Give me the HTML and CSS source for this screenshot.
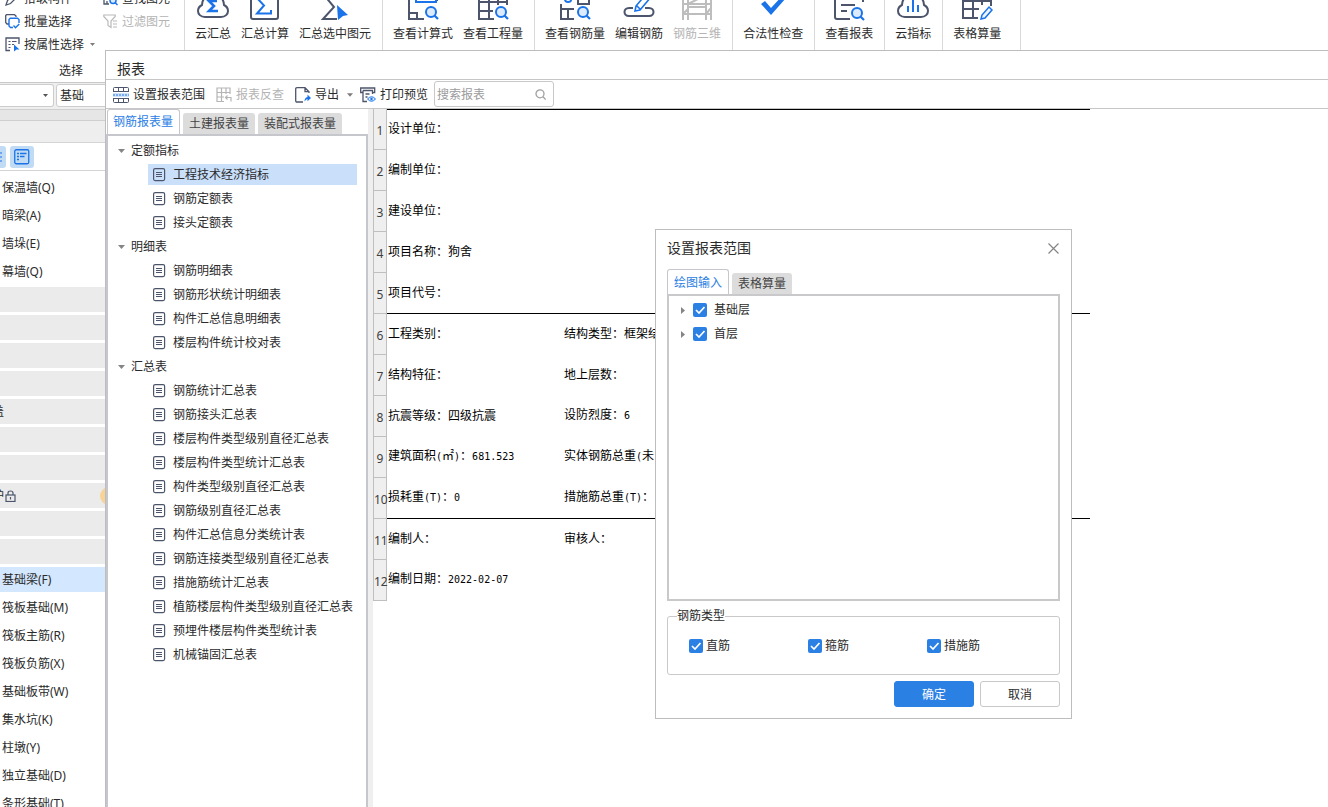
FILE: index.html
```html
<!DOCTYPE html>
<html lang="zh-CN">
<head>
<meta charset="utf-8">
<meta name="viewport" content="width=device-width, initial-scale=1">
<title>报表</title>
<link rel="stylesheet" href="styles.css">
</head>
<body>
<svg class="defs" aria-hidden="true">
  <symbol id="i-doc" viewBox="0 0 13 14"><rect x=".6" y=".6" width="11" height="12" rx="1.5" fill="none" stroke="#4c556b" stroke-width="1.2"/><path d="M3 4.500h6M3 6.500h6M3 8.500h6" stroke="#4c556b"/></symbol>
  <symbol id="i-down" viewBox="0 0 7 4"><path d="M0 0h7L3.5 4z" fill="currentColor"/></symbol>
  <symbol id="i-right" viewBox="0 0 4 7"><path d="M0 0v7L4 3.500z" fill="currentColor"/></symbol>
  <symbol id="i-lens" viewBox="0 0 14 14"><circle cx="6" cy="6" r="5" fill="#dcebff" stroke="#1a73e8" stroke-width="2"/><path d="M9.500 9.500L13 13" stroke="#1a73e8" stroke-width="2.200"/></symbol>
</svg>

<main class="app">
  <header class="ribbon">
    <section class="pick">
      <div class="pick-grid">
        <button class="cmd"><svg width="15" height="15" viewBox="0 0 15 15" fill="none"><path d="M1 14l1.500-4.500 7-7 3 3-7 7z" stroke="#4c556b" stroke-width="1.300"/><path d="M8 4l3 3" stroke="#1a73e8" stroke-width="1.500"/></svg>拾取构件</button>
        <button class="cmd"><svg width="15" height="15" viewBox="0 0 15 15" fill="none"><path d="M1 1v12h5M1 1h10v3M4 5h3M4 13v-3" stroke="#4c556b" stroke-width="1.300"/><circle cx="10" cy="9.500" r="3" fill="#dcebff" stroke="#1a73e8" stroke-width="1.500"/><path d="M12 11.500l2.500 2.500" stroke="#1a73e8" stroke-width="1.500"/></svg>查找图元</button>
        <button class="cmd"><svg width="15" height="15" viewBox="0 0 15 15" fill="none"><path d="M4 10H2L.700 8.500V1.500L1.500.700h8l1.500 1.300v1" stroke="#4c556b" stroke-width="1.300"/><path d="M8 13.500H5.500L4 12V5.500L5.200 4.300H12.500L14 5.500V9" stroke="#1a73e8" stroke-width="1.400"/><path d="M8.500 11.500l2 2.200 3.700-3.700" stroke="#1a73e8" stroke-width="1.400"/></svg>批量选择</button>
        <button class="cmd" disabled><svg width="15" height="15" viewBox="0 0 15 15" fill="none" stroke="#b9b9b9" stroke-width="1.200"><path d="M.800 1h11.400v1.500L8 7v6.500L5 11.500V7L.800 2.500zM10 7h4M10 10h4M10 13h4"/></svg>过滤图元</button>
        <button class="cmd cmd-wide"><svg width="15" height="15" viewBox="0 0 15 15" fill="none"><path d="M5 13.500H1V1h13v6" stroke="#4c556b" stroke-width="1.300"/><path d="M3.500 4.500h2M7 4.500h4.500M3.500 7.500h2M7 7.500h2M3.500 10.500h2" stroke="#4c556b" stroke-width="1.200"/><path d="M9 7.500l5.500 5H11.500L9 14.500z" fill="#1a73e8"/></svg>按属性选择<svg class="caret" width="5" height="3"><use href="#i-down"/></svg></button>
      </div>
      <div class="pick-label">选择</div>
    </section>
    <section class="group">
      <button class="tool"><svg width="32" height="32" viewBox="0 0 32 32" fill="none"><path d="M8 27C3.500 27 1 24 1 21c0-3 2-5 4-6C5 9 10 4 16 4s11 5 11 11c2 1 4 3 4 6 0 3-2.500 6-7 6z" stroke="#4c556b" stroke-width="2"/><path d="M20 11h-8l5 5-5 5h9" stroke="#1a73e8" stroke-width="2.600"/></svg>云汇总</button>
      <button class="tool"><svg width="32" height="32" viewBox="0 0 32 32" fill="none"><rect x="2" y="2" width="27" height="27" rx="2" stroke="#4c556b" stroke-width="2"/><path d="M21 8H8l7 7.500-7 8h14V20" stroke="#1a73e8" stroke-width="2"/></svg>汇总计算</button>
      <button class="tool"><svg width="32" height="32" viewBox="0 0 32 32" fill="none"><path d="M21 5H5l10 12L4 29h14" stroke="#4c556b" stroke-width="2"/><path d="M18 15l11 10-5 1-5 4z" fill="#1a73e8"/></svg>汇总选中图元</button>
    </section>
    <section class="group">
      <button class="tool"><svg width="32" height="32" viewBox="0 0 32 32" fill="none"><path d="M17 29H2V2h28v9M2 23h8v6" stroke="#4c556b" stroke-width="2"/><path d="M9 5v7h20V5" stroke="#1a73e8" stroke-width="2"/><use href="#i-lens" x="18" y="16" width="14" height="14"/></svg>查看计算式</button>
      <button class="tool"><svg width="32" height="32" viewBox="0 0 32 32" fill="none"><path d="M17 29H2V3h28v12M2 12h28M2 21h14M12 3v26M21 3v12" stroke="#4c556b" stroke-width="2"/><use href="#i-lens" x="18" y="16" width="14" height="14"/></svg>查看工程量</button>
    </section>
    <section class="group">
      <button class="tool"><svg width="32" height="32" viewBox="0 0 32 32" fill="none"><path d="M15 29H2V14M2 19h13M9 19v10M19 5v9h11V5" stroke="#4c556b" stroke-width="2"/><path d="M6 6v3q0 3 3 3t3-2" stroke="#1a73e8" stroke-width="2"/><use href="#i-lens" x="18" y="16" width="14" height="14"/></svg>查看钢筋量</button>
      <button class="tool"><svg width="32" height="32" viewBox="0 0 32 32" fill="none"><path d="M10 18H6c-6 0-6 8 0 8h20c6 0 6-8 0-8h-4" stroke="#4c556b" stroke-width="2"/><path d="M12 21l1-5L24 3l4 4-11 13zM14 16l3 3" stroke="#1a73e8" stroke-width="1.600"/></svg>编辑钢筋</button>
      <button class="tool" disabled><svg width="32" height="32" viewBox="0 0 32 32" fill="none" stroke="#bdbdbd" stroke-width="2"><path d="M2 3v27M7 3v27M25 3v27M30 3v27M2 14h28M2 24h28M7 14l18-9M2 24l5-5M7 17h18M25 24l5-6"/></svg>钢筋三维</button>
    </section>
    <section class="group">
      <button class="tool"><svg width="32" height="32" viewBox="0 0 32 32"><path d="M4 14l4-3 6 7L26 5l3 3-15 17z" fill="#1a73e8"/></svg>合法性检查</button>
    </section>
    <section class="group">
      <button class="tool"><svg width="32" height="32" viewBox="0 0 32 32" fill="none"><path d="M17 29H4q-2 0-2-2V3h28v9M8 15h14M8 21h6" stroke="#4c556b" stroke-width="2"/><use href="#i-lens" x="18" y="17" width="14" height="14"/></svg>查看报表</button>
    </section>
    <section class="group">
      <button class="tool"><svg width="32" height="32" viewBox="0 0 32 32" fill="none"><path d="M8 27C3.500 27 1 24 1 21c0-3 2-5 4-6C5 9 10 4 16 4s11 5 11 11c2 1 4 3 4 6 0 3-2.500 6-7 6z" stroke="#4c556b" stroke-width="2"/><path d="M11 22v-6M16 22V10M21 22v-7" stroke="#1a73e8" stroke-width="2"/></svg>云指标</button>
    </section>
    <section class="group group-last">
      <button class="tool"><svg width="32" height="32" viewBox="0 0 32 32" fill="none"><path d="M17 28H2V3h28v13M2 11h28M2 19h16M12 3v25M21 3v12" stroke="#4c556b" stroke-width="2"/><path d="M20 29l1-4 7-8 3 3-7 8z" stroke="#1a73e8" stroke-width="1.500" fill="#eef5ff"/></svg>表格算量</button>
    </section>
  </header>

  <aside class="side">
    <div class="side-selects">
      <select class="sel sel-a" aria-label="楼层"><option></option></select>
      <select class="sel sel-b" aria-label="构件类型"><option>基础</option></select>
    </div>
    <div class="bar bar-dark"></div>
    <div class="bar bar-light"></div>
    <div class="side-views">
      <button class="view view-cut" aria-label="列表视图"><svg width="5" height="16" viewBox="0 0 5 16"><path d="M0 4h2M0 8h2M0 12h2" stroke="#1a73e8"/></svg></button>
      <button class="view" aria-label="分组视图"><svg width="16" height="16" viewBox="0 0 16 16" fill="none" stroke="#1a73e8" stroke-width="1.300"><rect x=".750" y=".750" width="14" height="14" rx="1.500"/><path d="M3 4.500h2M6 4.500h6.500M3 7.500h2M6 7.500h4.500M3 10.500h2"/></svg></button>
    </div>
    <nav class="kinds">
      <button class="kind">保温墙(Q)</button>
      <button class="kind">暗梁(A)</button>
      <button class="kind">墙垛(E)</button>
      <button class="kind">幕墙(Q)</button>
      <div class="head"></div>
      <div class="head"></div>
      <div class="head"></div>
      <div class="head"></div>
      <div class="head"><span class="tail">盖</span></div>
      <div class="head"></div>
      <div class="head"></div>
      <div class="head"><span class="tail">护</span><svg class="lock" width="11" height="12" viewBox="0 0 11 12" fill="none" stroke="#4c556b" stroke-width="1.200"><rect x="1" y="5" width="9" height="6.500"/><path d="M3 5V3q0-2 2.500-2T8 3v2M5.500 7v2.500"/></svg><i class="dot"></i></div>
      <div class="head"></div>
      <div class="head"></div>
      <button class="kind kind-on">基础梁(F)</button>
      <button class="kind">筏板基础(M)</button>
      <button class="kind">筏板主筋(R)</button>
      <button class="kind">筏板负筋(X)</button>
      <button class="kind">基础板带(W)</button>
      <button class="kind">集水坑(K)</button>
      <button class="kind">柱墩(Y)</button>
      <button class="kind">独立基础(D)</button>
      <button class="kind">条形基础(T)</button>
    </nav>
  </aside>

  <section class="window" aria-label="报表">
    <h1 class="window-title">报表</h1>
    <div class="toolbar">
      <button class="act"><svg width="16" height="16" viewBox="0 0 16 16" fill="none"><path d="M.500 5V1.500q0-1 1-1h13q1 0 1 1V5M.500 11v3.500q0 1 1 1h13q1 0 1-1V11M5.500 1v4M10.500 1v4M5.500 11v4.500M10.500 11v4.500M1 4.500h14M1 11.500h14" stroke="#4c556b"/><path d="M0 6h16v4H0z" fill="#cfe3fc"/><path d="M0 8h16" stroke="#1a73e8" stroke-dasharray="2 1"/></svg>设置报表范围</button>
      <button class="act" disabled><svg width="16" height="16" viewBox="0 0 16 16" fill="none" stroke="#b5b5b5" stroke-width="1.200"><path d="M8 14.500H1V1h13v6M1 5.500h13M1 10h7M5.500 1v13.500M10 1v6M15 14.500V10.500H9.500M11.500 8.500l-2 2 2 2"/></svg>报表反查</button>
      <button class="act"><svg width="16" height="16" viewBox="0 0 16 16" fill="none"><path d="M8 15H2q-1.300 0-1.300-1.300V2Q.700.700 2 .700h8l4 4V6M10 1v3.700h4" stroke="#4c556b" stroke-width="1.300"/><path d="M9.500 14.500q0-4 3-4.500V7.500l3.500 3.500-3.500 3.200V12q-1.500 0-3 2.500z" fill="#1a73e8"/></svg>导出<svg class="caret" width="6" height="4"><use href="#i-down"/></svg></button>
      <button class="act"><svg width="16" height="16" viewBox="0 0 16 16" fill="none"><path d="M2.500 5.500H.700V1h14v4.500H13M3 3.500h9.500V7M3 3.500v11h4M5.500 7h4M5.500 10h2" stroke="#4c556b" stroke-width="1.300"/><path d="M7.500 12q4-4.500 8 0-4 4.500-8 0z" fill="#dcebff" stroke="#1a73e8"/><circle cx="11.500" cy="12" r="1.200" fill="#1a73e8"/></svg>打印预览</button>
      <label class="search"><input type="search" placeholder="搜索报表" aria-label="搜索报表"><svg width="11" height="11" viewBox="0 0 11 11" fill="none" stroke="#a0a0a0" stroke-width="1.300"><circle cx="5" cy="4.800" r="4"/><path d="M8 7.800l2.700 2.700"/></svg></label>
    </div>
    <div class="body">
      <div class="left">
        <div class="tabs">
          <button class="tab tab-on">钢筋报表量</button>
          <button class="tab">土建报表量</button>
          <button class="tab">装配式报表量</button>
        </div>
        <div class="tree">
          <button class="node"><svg width="7" height="4"><use href="#i-down"/></svg>定额指标</button>
          <button class="leaf leaf-on"><svg width="13" height="14"><use href="#i-doc"/></svg>工程技术经济指标</button>
          <button class="leaf"><svg width="13" height="14"><use href="#i-doc"/></svg>钢筋定额表</button>
          <button class="leaf"><svg width="13" height="14"><use href="#i-doc"/></svg>接头定额表</button>
          <button class="node"><svg width="7" height="4"><use href="#i-down"/></svg>明细表</button>
          <button class="leaf"><svg width="13" height="14"><use href="#i-doc"/></svg>钢筋明细表</button>
          <button class="leaf"><svg width="13" height="14"><use href="#i-doc"/></svg>钢筋形状统计明细表</button>
          <button class="leaf"><svg width="13" height="14"><use href="#i-doc"/></svg>构件汇总信息明细表</button>
          <button class="leaf"><svg width="13" height="14"><use href="#i-doc"/></svg>楼层构件统计校对表</button>
          <button class="node"><svg width="7" height="4"><use href="#i-down"/></svg>汇总表</button>
          <button class="leaf"><svg width="13" height="14"><use href="#i-doc"/></svg>钢筋统计汇总表</button>
          <button class="leaf"><svg width="13" height="14"><use href="#i-doc"/></svg>钢筋接头汇总表</button>
          <button class="leaf"><svg width="13" height="14"><use href="#i-doc"/></svg>楼层构件类型级别直径汇总表</button>
          <button class="leaf"><svg width="13" height="14"><use href="#i-doc"/></svg>楼层构件类型统计汇总表</button>
          <button class="leaf"><svg width="13" height="14"><use href="#i-doc"/></svg>构件类型级别直径汇总表</button>
          <button class="leaf"><svg width="13" height="14"><use href="#i-doc"/></svg>钢筋级别直径汇总表</button>
          <button class="leaf"><svg width="13" height="14"><use href="#i-doc"/></svg>构件汇总信息分类统计表</button>
          <button class="leaf"><svg width="13" height="14"><use href="#i-doc"/></svg>钢筋连接类型级别直径汇总表</button>
          <button class="leaf"><svg width="13" height="14"><use href="#i-doc"/></svg>措施筋统计汇总表</button>
          <button class="leaf"><svg width="13" height="14"><use href="#i-doc"/></svg>植筋楼层构件类型级别直径汇总表</button>
          <button class="leaf"><svg width="13" height="14"><use href="#i-doc"/></svg>预埋件楼层构件类型统计表</button>
          <button class="leaf"><svg width="13" height="14"><use href="#i-doc"/></svg>机械锚固汇总表</button>
        </div>
      </div>
      <div class="splitter"></div>
      <div class="sheet">
        <table class="report">
          <colgroup><col class="c-num"><col class="c-a"><col class="c-b"></colgroup>
          <tbody>
            <tr class="rule-top"><th scope="row">1</th><td>设计单位：</td><td></td></tr>
            <tr><th scope="row">2</th><td>编制单位：</td><td></td></tr>
            <tr><th scope="row">3</th><td>建设单位：</td><td></td></tr>
            <tr><th scope="row">4</th><td>项目名称：狗舍</td><td></td></tr>
            <tr class="rule"><th scope="row">5</th><td>项目代号：</td><td></td></tr>
            <tr><th scope="row">6</th><td>工程类别：</td><td>结构类型：框架结构</td></tr>
            <tr><th scope="row">7</th><td>结构特征：</td><td>地上层数：</td></tr>
            <tr><th scope="row">8</th><td>抗震等级：四级抗震</td><td>设防烈度：<span class="half">6</span></td></tr>
            <tr><th scope="row">9</th><td>建筑面积<span class="half">(</span>㎡<span class="half">)</span>：<span class="half">681.523</span></td><td>实体钢筋总重<span class="half">(</span>未</td></tr>
            <tr class="rule"><th scope="row">10</th><td>损耗重<span class="half">(T)</span>：<span class="half">0</span></td><td>措施筋总重<span class="half">(T)</span>：</td></tr>
            <tr><th scope="row">11</th><td>编制人：</td><td>审核人：</td></tr>
            <tr><th scope="row">12</th><td>编制日期：<span class="half">2022-02-07</span></td><td></td></tr>
          </tbody>
        </table>
      </div>
    </div>
  </section>

  <section class="dialog" role="dialog" aria-labelledby="dlg-title">
    <div class="dialog-head">
      <h2 id="dlg-title">设置报表范围</h2>
      <button class="close" aria-label="关闭"><svg width="11" height="11" viewBox="0 0 11 11"><path d="M.500.500l10 10M10.500.500l-10 10" stroke="#858585" stroke-width="1.200"/></svg></button>
    </div>
    <div class="dialog-tabs">
      <button class="tab tab-on">绘图输入</button>
      <button class="tab">表格算量</button>
    </div>
    <div class="floors">
      <div class="floor"><svg width="4" height="7"><use href="#i-right"/></svg><label><input type="checkbox" checked>基础层</label></div>
      <div class="floor"><svg width="4" height="7"><use href="#i-right"/></svg><label><input type="checkbox" checked>首层</label></div>
    </div>
    <fieldset class="types">
      <legend>钢筋类型</legend>
      <label><input type="checkbox" checked>直筋</label>
      <label><input type="checkbox" checked>箍筋</label>
      <label><input type="checkbox" checked>措施筋</label>
    </fieldset>
    <div class="dialog-foot">
      <button class="btn btn-primary">确定</button>
      <button class="btn">取消</button>
    </div>
  </section>
</main>
</body>
</html>
```
FILE: styles.css
```css
* { box-sizing: border-box; }
body {
  margin: 0;
  background: #fff;
  color: #2b2b2b;
  font: 12px/16px "Noto Sans", "Noto Sans CJK SC", sans-serif;
}
button {
  margin: 0;
  padding: 0;
  border: 0;
  background: none;
  color: inherit;
  font: inherit;
  white-space: nowrap;
}
button:disabled { color: #b4b4b4; }
svg { flex: none; display: block; }
.defs { position: absolute; width: 0; height: 0; }

.app {
  position: relative;
  display: flex;
  flex-direction: column;
  height: 100vh;
  overflow: hidden;
}

/* ribbon */
.ribbon {
  flex: none;
  display: flex;
  align-items: flex-end;
  height: 83px;
  overflow: hidden;
  border-bottom: 1px solid #c8c8c8;
}
.pick {
  width: 185px;
  padding: 0 0 3px 5px;
  border-right: 1px solid #d9d9d9;
}
.pick-grid {
  display: grid;
  grid-template-columns: 98px 1fr;
  grid-auto-rows: 23px;
  margin-bottom: 7px;
}
.cmd { display: flex; align-items: center; gap: 4px; }
.cmd-wide { grid-column: 1 / 3; }
.caret { margin-left: 2px; color: #7d7d7d; }
.pick-label { padding-left: 54px; }
.group {
  display: flex;
  gap: 10px;
  padding: 0 11px 40px 10px;
  border-right: 1px solid #d9d9d9;
}
.group-last { padding-right: 19px; }
.tool {
  display: flex;
  flex-direction: column;
  align-items: center;
  gap: 4px;
}

/* left component list */
.side {
  flex: 1;
  display: flex;
  flex-direction: column;
  width: 105px;
  min-height: 0;
  overflow: hidden;
}
.side-selects {
  flex: none;
  display: flex;
  gap: 2px;
  height: 27px;
  padding: 1px 0 3px;
  background: #efefef;
  border-bottom: 1px solid #cfcfcf;
}
.sel {
  flex: none;
  height: 23px;
  padding: 0 3px;
  border: 1px solid #cdcdcd;
  border-radius: 3px;
  appearance: none;
  background: #fff;
  color: #2b2b2b;
  font: inherit;
}
.sel-a {
  width: 54px;
  border-left: 0;
  border-radius: 0 3px 3px 0;
  background: #fff url("data:image/svg+xml,%3Csvg xmlns='http://www.w3.org/2000/svg' width='5' height='3'%3E%3Cpath d='M0 0h5L2.500 3z' fill='%23555'/%3E%3C/svg%3E") no-repeat right 5px center;
}
.sel-b { width: 100px; }
.bar { flex: none; }
.bar-dark { height: 11px; background: #e6e6e6; border-bottom: 1px solid #cfcfcf; }
.bar-light { height: 22px; background: #eee; border-bottom: 1px solid #d4d4d4; }
.side-views {
  flex: none;
  display: flex;
  gap: 4px;
  padding: 3px 0 2px;
  border-bottom: 1px solid #d4d4d4;
}
.view {
  display: flex;
  align-items: center;
  justify-content: center;
  width: 24px;
  height: 22px;
  border-radius: 3px;
  background: #c2dbf5;
}
.view-cut { width: 6px; justify-content: flex-start; border-radius: 0 3px 3px 0; }
.kinds {
  display: flex;
  flex-direction: column;
  gap: 3px;
  padding-top: 4px;
}
.kind, .head {
  flex: none;
  display: flex;
  align-items: center;
  height: 25px;
}
.kind { padding-left: 2px; }
.kind-on { background: #d3e7ff; }
.head { background: #ebebeb; overflow: hidden; }
.tail {
  display: flex;
  justify-content: flex-end;
  width: 4px;
  overflow: hidden;
}
.lock { margin-left: 1px; }
.dot {
  flex: none;
  width: 18px;
  height: 18px;
  margin: 0 -13px 0 auto;
  border-radius: 50%;
  background: #f8d398;
}

/* report window */
.window {
  position: absolute;
  inset: 50px 0 0 105px;
  display: flex;
  flex-direction: column;
  border: solid #bdbdbd;
  border-width: 1px 0 0 1px;
  background: #fff;
}
.window-title {
  flex: none;
  margin: 0;
  padding: 8px 11px 0;
  height: 28px;
  font-size: 14px;
  line-height: 20px;
  font-weight: 400;
}
.toolbar {
  flex: none;
  display: flex;
  align-items: center;
  height: 30px;
  padding-left: 7px;
  border: solid #c6c6c6;
  border-width: 1px 0;
}
.act { display: flex; align-items: center; gap: 4px; margin-right: 11px; padding-top: 2px; }
.act:nth-child(3) { margin-right: 7px; }
.act .caret { margin-left: 4px; }
.act:nth-child(4) { margin-right: 6px; }
.search {
  display: flex;
  align-items: center;
  width: 120px;
  height: 26px;
  padding: 1px 7px 0 2px;
  border: 1px solid #c8c8c8;
  border-radius: 3px;
}
.search input {
  flex: 1;
  min-width: 0;
  padding: 0;
  border: 0;
  outline: 0;
  background: none;
  font: inherit;
}
.search input::placeholder { color: #9b9b9b; }
.body { flex: 1; display: flex; min-height: 0; }
.left { flex: none; display: flex; flex-direction: column; width: 262px; }
.tabs {
  flex: none;
  display: flex;
  align-items: flex-end;
  gap: 3px;
  padding-left: 1px;
}
.tab {
  height: 21px;
  padding: 0 6px;
  border-radius: 3px 3px 0 0;
  background: #dcdcdc;
  color: #444;
}
.tab-on {
  height: 25px;
  padding: 0 6px 0 5px;
  border: 1px solid #c6c7cc;
  border-bottom: 0;
  background: #fff;
  color: #2b80e4;
}
.tree {
  flex: 1;
  display: flex;
  flex-direction: column;
  gap: 3px;
  padding: 4px 9px 0 10px;
  border: 2px solid #c6c7cc;
  border-bottom: 0;
}
.node, .leaf { flex: none; display: flex; align-items: center; height: 21px; }
.node { gap: 6px; color: #2b2b2b; }
.node svg { color: #858585; }
.leaf { gap: 7px; margin-left: 30px; padding-left: 5px; }
.leaf-on { background: #c9dffa; }
.splitter { flex: none; width: 5px; background: #efefef; }
.sheet { flex: 1; min-width: 0; overflow: hidden; }
.report {
  width: 717px;
  table-layout: fixed;
  border-spacing: 0;
  color: #000;
}
.c-num { width: 14px; }
.c-a { width: 176px; }
.report th {
  height: 41px;
  padding: 3px 0 0;
  border: solid #bfbfbf;
  border-width: 0 1px 1px;
  background: #efefef;
  color: #404040;
  font-weight: 400;
}
.report td {
  padding: 0 0 1px 1px;
  overflow: hidden;
  white-space: nowrap;
  border-bottom: 1px solid transparent;
}
.report .rule td { border-bottom-color: #000; }
.report .rule-top td { border-top: 1px solid #000; }
.half { font: 10px/16px "DejaVu Sans Mono", monospace; }

/* range dialog */
.dialog {
  position: absolute;
  left: 655px;
  top: 229px;
  width: 417px;
  padding: 8px 11px 11px;
  border: 1px solid #bdbdbd;
  background: #fff;
}
.dialog-head { display: flex; justify-content: space-between; align-items: center; margin-bottom: 11px; }
.dialog h2 { margin: 0; font-size: 14px; line-height: 20px; font-weight: 400; }
.close { padding: 1px; }
.dialog-tabs { display: flex; align-items: flex-end; gap: 3px; }
.dialog-tabs .tab { padding-top: 1px; }
.dialog-tabs .tab-on { padding: 1px 6px 0; }
.floors {
  display: flex;
  flex-direction: column;
  gap: 8px;
  height: 307px;
  padding: 6px 12px;
  border: 2px solid #c9c9cb;
}
.floor { display: flex; align-items: center; gap: 8px; color: #2b2b2b; }
.floor svg { color: #858585; }
.floor label { display: flex; align-items: center; gap: 7px; }
input[type="checkbox"] {
  flex: none;
  width: 14px;
  height: 14px;
  margin: 0;
  appearance: none;
  border-radius: 2px;
  background: #2b80e4 url("data:image/svg+xml,%3Csvg xmlns='http://www.w3.org/2000/svg' width='14' height='14'%3E%3Cpath d='M3 7l3 3 5.500-6' fill='none' stroke='%23fff' stroke-width='1.700'/%3E%3C/svg%3E") center no-repeat;
}
.types {
  display: grid;
  grid-template-columns: repeat(3, 119px);
  margin: 7px 0 6px;
  height: 67px;
  padding: 14px 0 0 21px;
  border: 1px solid #c9c9cb;
  border-radius: 3px;
}
.types legend { margin-left: -12px; padding: 0; }
.types label { display: flex; align-items: center; align-self: start; gap: 3px; }
.dialog-foot { display: flex; justify-content: flex-end; gap: 6px; }
.btn {
  width: 80px;
  height: 26px;
  padding-top: 1px;
  border: 1px solid #c8c8c8;
  border-radius: 3px;
  background: #fff;
}
.btn-primary { border-color: #2b80e4; background: #2b80e4; color: #fff; }
```
